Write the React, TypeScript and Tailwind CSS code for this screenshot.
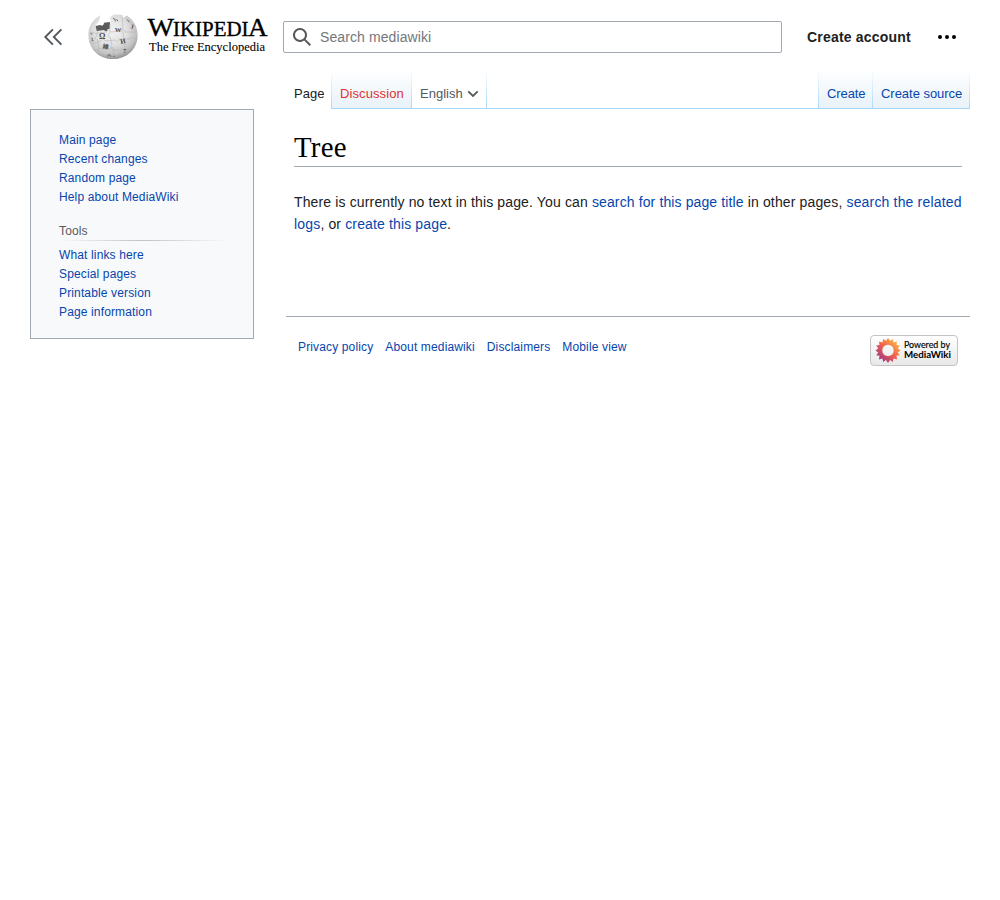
import React from "react";

const link = "text-[#0645ad]";

function Globe() {
  return (
    <svg width="50" height="50" viewBox="0 0 50 50" className="block shrink-0" aria-label="Puzzle globe">
      <defs>
        <radialGradient id="globe" cx="0.45" cy="0.36" r="0.67">
          <stop offset="0" stopColor="#f4f4f4" />
          <stop offset="0.5" stopColor="#e0e0e0" />
          <stop offset="0.8" stopColor="#c0c0c0" />
          <stop offset="1" stopColor="#888" />
        </radialGradient>
      </defs>
      <path
        d="M12.8 2.1C5.2 6.2.4 13.1.4 21.4.4 36 11 46 24.9 46c14 0 24.7-10.2 24.7-23.6 0-8.5-3.9-15.4-10.1-19.4-1.2-.8-2 .2-2.7.9-1.3 1-2.6 0-2.2-1.7C31.4 1.3 28 1.3 24.8 1.8c-.2 1.8-1.7 1.6-2.8 2.2-1 .9-.2 2.4.8 2.3l-.7 5.2-5 1-3.8 2.1-5.4.2c-.9-2.8.9-4 2.2-5.4 1.9-1.1.9-5.2 2.7-7.3Z"
        fill="url(#globe)"
      />
      <path d="m7.6 13.1 4.5-1.2 2 .9 1.5-1.2.4-1.9 6-.7-.5 7-1.9.1c-.1 2.8-3 2.8-3.3 1l-7.5 1Z" fill="#5b5b5b" />
      <g fill="none" stroke="#adadad" strokeWidth="0.5">
        <path d="M2 20c3-2 5 2 8 0l9-1c1-4 4 0 4 0l10-1c1-3 4-1 4 1l11 0M1 29c3-1 3 3 6 1l6-2c1-3 4-2 4 0l10-1c1 3 5 1 4-1l11 0c0-3 4-2 4 0h3M5 37c5 1 6-3 9-1l8 0c2-3 5-1 4 1l9 0c1-2 4-2 4 0l5 0" />
        <path d="m9 18 0 5c-3 1-2 4 1 4l1 12 4 5M22 11l0 9c-3 1-2 4 0 4l2 8c-2 2-2 4 1 4l1 9M34 5l1 10c-3 1-2 4 0 4l1 8c-3 2-1 5 1 4l0 9M41 6c0 5 5 5 3 11" />
      </g>
      <g fill="#4b4b4b" fontFamily='"Liberation Serif", serif' fontWeight="bold" textAnchor="middle">
        <text x="14.3" y="26" fontSize="8">Ω</text>
        <text x="30" y="19.3" fontSize="6.6">W</text>
        <text x="35" y="30.5" fontSize="7" transform="rotate(-12 35 28)">И</text>
        <text x="17.7" y="35.8" fontSize="6" fontFamily='"Noto Sans CJK JP", sans-serif' transform="rotate(8 17.7 34)">維</text>
        <text x="36.5" y="39.5" fontSize="5.5">7</text>
        <text x="44" y="15.7" fontSize="6" transform="rotate(12 44 14)">J</text>
      </g>
      <g fill="none" stroke="#666" strokeWidth="1">
        <path d="m25 5 2.2 1.6 0 1.8M28.6 6.2l1.3 2M2.5 20.5l1.8.8M3.2 25.5c.9-1 2 .2 1 1.2s.6 1.6 1.4.8M19.8 43.4l.4-1.6 2 .2.5 1.8M25.2 43.7l1.6-.7M39 6.5l2 2.4" />
      </g>
    </svg>
  );
}

function Wordmark() {
  return (
    <svg width="121" height="42" viewBox="0 0 121 42" className="ml-[9px] block shrink-0 overflow-visible" fontFamily='"Liberation Serif", serif' fill="#000">
      <g stroke="#000" strokeWidth="0.35">
        <text x="0.5" y="23.3" fontSize="26" textLength="26.5" lengthAdjust="spacingAndGlyphs">W</text>
        <text x="26" y="23.3" fontSize="20" textLength="75.5" lengthAdjust="spacingAndGlyphs">IKIPEDI</text>
        <text x="101" y="23.3" fontSize="26" textLength="19.5" lengthAdjust="spacingAndGlyphs">A</text>
      </g>
      <text x="2" y="37.7" fontSize="13.4" textLength="116" lengthAdjust="spacingAndGlyphs" stroke="#000" strokeWidth="0.1">The Free Encyclopedia</text>
    </svg>
  );
}

function Flower() {
  return (
    <svg width="26" height="26" viewBox="-13 -12.4 26 26" className="block shrink-0">
      <defs>
        <linearGradient id="petals" gradientUnits="userSpaceOnUse" x1="8" y1="-9" x2="-8" y2="9">
          <stop stopColor="#fcb045" />
          <stop offset="0.5" stopColor="#f0604d" />
          <stop offset="1" stopColor="#a33a80" />
        </linearGradient>
      </defs>
      <path
        fill="url(#petals)"
        fillRule="evenodd"
        d="M0-12.4 2.1-9.6 4.8-11.4 5.6-8 9-9 8.5-5.4 11.7-4.8 9.8-2 12.5 0 9.8 2 11.7 4.8 8.5 5.4 9 9 5.6 8 4.8 11.6 2.1 9.6 0 12.6-2.1 9.6-4.8 11.6-5.6 8-9 9-8.5 5.4-11.7 4.8-9.8 2-12.5 0-9.8-2-11.7-4.8-8.5-5.4-9-9-5.6-8-4.8-11.4-2.1-9.6ZM5.7 0A5.7 5.7 0 1 0-5.7 0 5.7 5.7 0 1 0 5.7 0Z"
      />
    </svg>
  );
}

function Divider() {
  return <span className="w-px shrink-0 bg-linear-to-b from-white to-[#a7d7f9]" />;
}

function Tab({ children, className }: { children: React.ReactNode; className: string }) {
  return <a className={`flex h-full shrink-0 items-start whitespace-nowrap pl-2 pt-[17px] leading-[15px] ${className}`}>{children}</a>;
}

const blueTab = "bg-linear-to-b from-white to-[#e8f2f8] border-b border-[#a7d7f9]";

function Links({ items }: { items: string[] }) {
  return (
    <ul>
      {items.map((item) => (
        <li key={item} className="h-[19px] leading-[19px]">
          <a className={link}>{item}</a>
        </li>
      ))}
    </ul>
  );
}

export default function App() {
  return (
    <div className="h-[900px] w-[1000px] bg-white px-[30px] font-['Liberation_Sans',Arial,sans-serif] text-[#202122]">
      <header className="flex h-[69px] items-start">
        <svg width="20" height="20" viewBox="0 0 20 20" className="ml-[13px] mt-[27px] shrink-0" fill="none" stroke="#54595d" strokeWidth="1.9">
          <path d="m9.9 2.4-7.6 7.6 7.6 7.6M18.4 2.4 10.8 10l7.6 7.6" />
        </svg>
        <div className="ml-[25px] mt-[13px] flex items-start">
          <Globe />
          <Wordmark />
        </div>
        <div className="ml-[15px] mt-[21px] flex h-8 w-[499px] shrink-0 items-center rounded-[2px] border border-[#a2a9b1] pl-2">
          <svg width="20" height="20" viewBox="0 0 20 20" fill="#54595d" className="shrink-0">
            <path fillRule="evenodd" d="M12.2 13.6a7 7 0 1 1 1.4-1.4l5.4 5.4-1.4 1.4zM3 8a5 5 0 1 0 10 0A5 5 0 0 0 3 8" />
          </svg>
          <input className="ml-2 w-full text-[14px] tracking-[0.1px] outline-none placeholder:text-[#72777d]" placeholder="Search mediawiki" />
        </div>
        <a className="ml-[25px] mt-[29px] whitespace-nowrap text-[14px] font-bold leading-4 tracking-[0.2px]">Create account</a>
        <svg width="20" height="20" viewBox="0 0 20 20" className="ml-auto mr-[13px] mt-[27px] shrink-0">
          <circle cx="3" cy="10" r="2" />
          <circle cx="10" cy="10" r="2" />
          <circle cx="17" cy="10" r="2" />
        </svg>
      </header>
      <div className="flex">
        <aside className="mt-10 h-[230px] w-[224px] shrink-0 border border-[#a2a9b1] bg-[#f8f9fa] pl-7 pt-[21px] text-[12px] tracking-[0.14px]">
          <Links items={["Main page", "Recent changes", "Random page", "Help about MediaWiki"]} />
          <h3 className="mt-[15px] h-[18px] leading-[18px] text-[#54595d]">Tools</h3>
          <div className="mb-[5px] h-px w-[168px] bg-linear-to-r from-transparent via-[#c0c4c9] via-50% to-transparent" />
          <Links items={["What links here", "Special pages", "Printable version", "Page information"]} />
        </aside>
        <div className="ml-8 w-[684px]">
          <nav className="flex h-10 text-[13px]">
            <Tab className="w-[45px] text-[#202122]">Page</Tab>
            <Divider />
            <Tab className={`w-[79px] tracking-[0.1px] ${blueTab} text-[#d33]`}>Discussion</Tab>
            <Divider />
            <Tab className="w-[74px] border-b border-[#a7d7f9] text-[#54595d]">
              English
              <svg width="12" height="12" viewBox="0 0 12 12" className="ml-1 mt-[2px] shrink-0" fill="none" stroke="#54595d" strokeWidth="1.8">
                <path d="M1.3 3.3 6 8l4.7-4.7" />
              </svg>
            </Tab>
            <Divider />
            <span className="grow border-b border-[#a7d7f9]" />
            <Divider />
            <Tab className={`w-[53px] tracking-[-0.1px] ${blueTab} ${link}`}>Create</Tab>
            <Divider />
            <Tab className={`w-[96px] tracking-[-0.03px] ${blueTab} ${link}`}>Create source</Tab>
            <Divider />
          </nav>
          <main className="h-[207px] px-2">
            <h1 className="h-[58px] border-b border-[#a2a9b1] pt-[20px] font-['Liberation_Serif',serif] text-[28.8px] leading-[37px] tracking-[0.25px] text-black">Tree</h1>
            <p className="-mr-1 mt-6 text-[14px] leading-[22.4px] tracking-[0.14px]">
              There is currently no text in this page. You can <a className={`${link} tracking-[0.12px]`}>search for this page title</a> in other pages,{" "}
              <a className={`${link} tracking-[0.17px]`}>search the related logs</a>, or <a className={link}>create this page</a>.
            </p>
          </main>
          <footer className="flex items-start justify-between border-t border-[#a2a9b1] px-3 text-[12px]">
            <div className={`mt-[21px] flex gap-3 leading-[18px] tracking-[0.14px] ${link}`}>
              <a>Privacy policy</a>
              <a>About mediawiki</a>
              <a>Disclaimers</a>
              <a>Mobile view</a>
            </div>
            <div className="mt-[18px] flex h-[31px] w-[88px] items-center rounded-[4px] border border-[#c4c4c4] bg-linear-to-b from-white to-[#e8e8e8] pl-[4px]">
              <Flower />
              <svg width="50" height="25" viewBox="0 0 50 25" className="ml-[2px] shrink-0 overflow-visible" fontFamily="Lato, sans-serif" fill="#000">
                <text x="1" y="10" fontSize="9" textLength="46" lengthAdjust="spacingAndGlyphs" stroke="#000" strokeWidth="0.15">Powered by</text>
                <text x="1" y="20.2" fontSize="9.6" fontWeight="bold" textLength="47" lengthAdjust="spacingAndGlyphs">MediaWiki</text>
              </svg>
            </div>
          </footer>
        </div>
      </div>
    </div>
  );
}
